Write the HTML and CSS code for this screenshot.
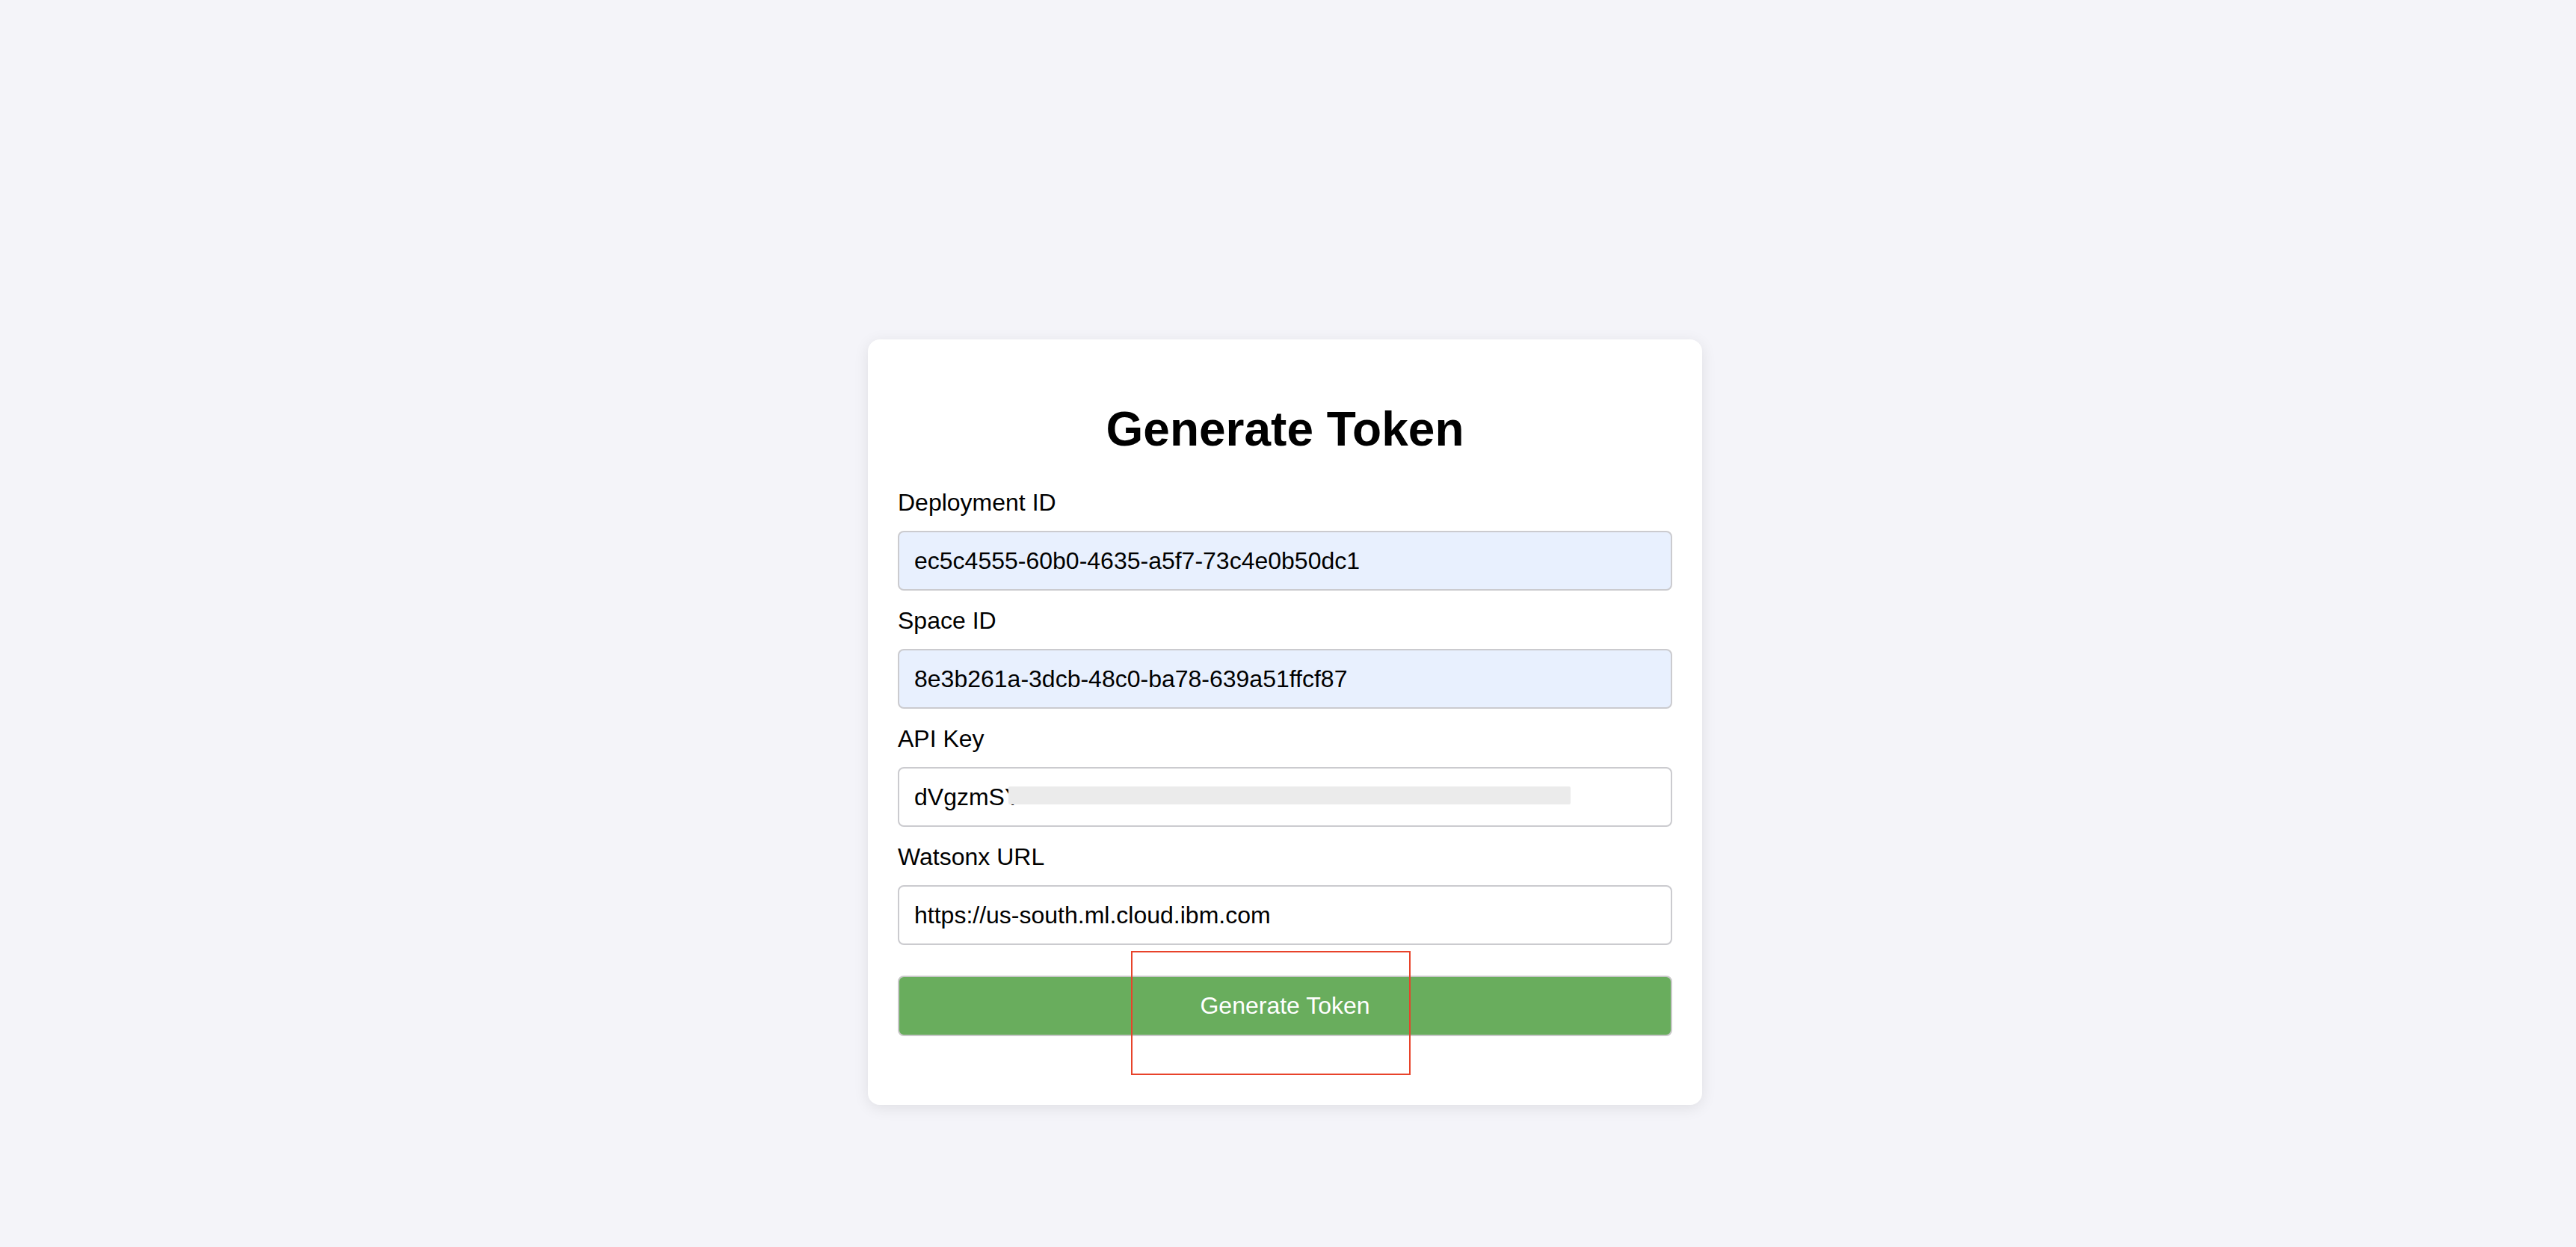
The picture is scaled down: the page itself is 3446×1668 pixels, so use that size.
FILE: index.html
```html
<!DOCTYPE html>
<html lang="en">
<head>
<meta charset="utf-8">
<title>Generate Token</title>
<link rel="stylesheet" href="styles.css">
</head>
<body>
<main class="page">
  <form class="card">
    <h2 class="title">Generate Token</h2>
    <label class="label" for="dep">Deployment ID</label>
    <input class="field autofill" id="dep" type="text" value="ec5c4555-60b0-4635-a5f7-73c4e0b50dc1">
    <label class="label" for="space">Space ID</label>
    <input class="field autofill" id="space" type="text" value="8e3b261a-3dcb-48c0-ba78-639a51ffcf87">
    <label class="label" for="key">API Key</label>
    <div class="field-wrap">
      <input class="field" id="key" type="text" value="dVgzmSY">
      <span class="redact"></span>
    </div>
    <label class="label" for="url">Watsonx URL</label>
    <input class="field" id="url" type="text" value="https://us-south.ml.cloud.ibm.com">
    <div class="btn-wrap">
      <button class="btn" type="button">Generate Token</button>
      <span class="highlight"></span>
    </div>
  </form>
</main>
</body>
</html>
```
FILE: styles.css
```css
html, body {
  margin: 0;
  padding: 0;
  background: #f4f4f9;
  font-family: "Liberation Sans", Arial, sans-serif;
}
.page {
  min-height: 1668px;
  display: flex;
  justify-content: center;
  align-items: flex-start;
  padding-top: 454px;
  box-sizing: border-box;
}
.card {
  width: 1116px;
  box-sizing: border-box;
  background: #ffffff;
  border-radius: 16px;
  box-shadow: 0 4px 20px rgba(0, 0, 0, 0.09);
  padding: 84px 40px 92px 40px;
  display: flex;
  flex-direction: column;
  margin-left: -8px;
}
.title {
  margin: 0 0 44px 0;
  text-align: center;
  font-size: 64px;
  font-weight: bold;
  line-height: 72px;
  color: #000;
}
.label {
  display: block;
  font-size: 32px;
  line-height: 36px;
  margin-bottom: 20px;
  color: #000;
}
.field {
  display: block;
  width: 100%;
  height: 80px;
  box-sizing: border-box;
  border: 2px solid #cbcbcf;
  border-radius: 8px;
  padding: 0 20px;
  font-family: "Liberation Sans", Arial, sans-serif;
  font-size: 32px;
  color: #000;
  background: #fff;
  margin: 0 0 22px 0;
  outline: none;
}
.field.autofill {
  background: #e8f0fe;
}
.field-wrap {
  position: relative;
}
.redact {
  position: absolute;
  left: 148px;
  top: 26px;
  width: 752px;
  height: 24px;
  background: #ebebeb;
  border-radius: 2px;
}
.btn-wrap {
  position: relative;
  margin-top: 19px;
}
.btn {
  display: block;
  width: 100%;
  height: 81px;
  box-sizing: border-box;
  background: #69ad5d;
  color: #ffffff;
  border: 2px solid #c8c8c8;
  border-radius: 8px;
  font-family: "Liberation Sans", Arial, sans-serif;
  font-size: 32px;
  cursor: pointer;
}
.highlight {
  position: absolute;
  left: 312px;
  top: -33px;
  width: 370px;
  height: 162px;
  border: 2px solid #e8432a;
  pointer-events: none;
}
```
